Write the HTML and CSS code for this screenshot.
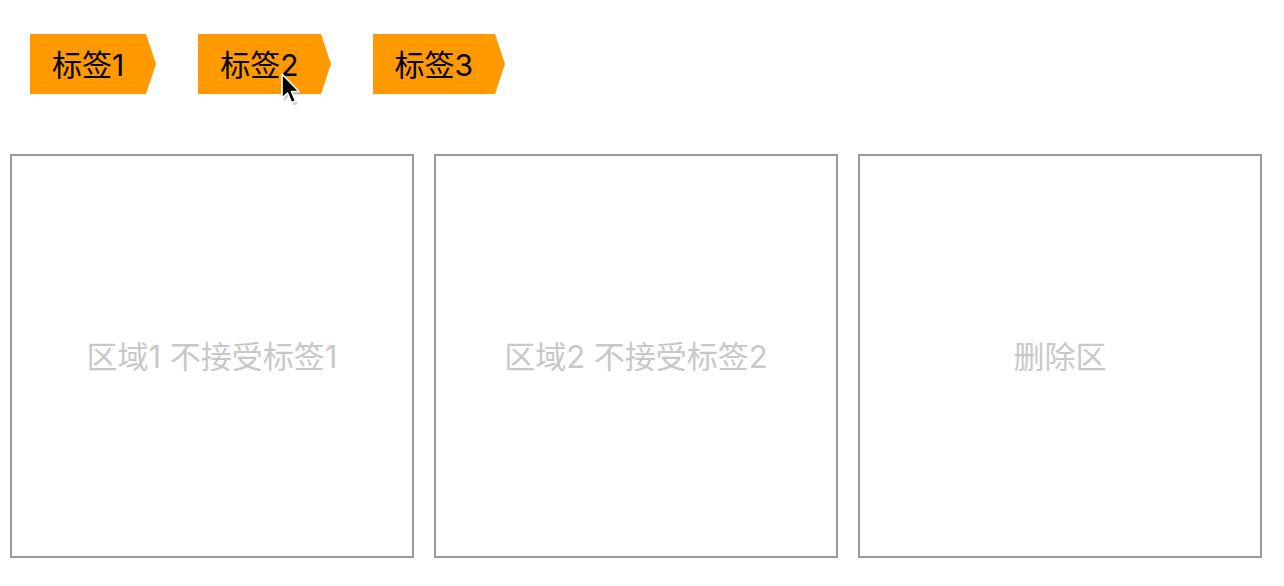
FILE: index.html
```html
<!DOCTYPE html>
<html lang="zh-CN">
<head>
<meta charset="utf-8">
<title>拖放</title>
<link rel="stylesheet" href="styles.css">
</head>
<body>
<div class="page">
  <div class="tags">
    <div class="tag">标签1</div>
    <div class="tag tag-hover">标签2
      <svg class="cursor" width="26" height="38" viewBox="0 0 26 38">
        <path d="M4 5 L4 29 L9.5 24 L13.5 33.5 L17.5 32 L13.5 22.5 L21 22.5 Z" fill="#bbb" opacity="0.7"/>
        <path d="M2 2 L2 26 L7.5 21 L11.5 30.5 L15.5 29 L11.5 19.5 L19 19.5 Z" fill="#000" stroke="#fff" stroke-width="1.6" stroke-linejoin="round"/>
      </svg>
    </div>
    <div class="tag">标签3</div>
  </div>
  <div class="zones">
    <div class="zone">区域1 不接受标签1</div>
    <div class="zone">区域2 不接受标签2</div>
    <div class="zone">删除区</div>
  </div>
</div>
</body>
</html>
```
FILE: styles.css
```css
html, body {
  margin: 0;
  padding: 0;
  background: #fff;
}
.page {
  font-family: "Inter", "Noto Sans CJK SC", sans-serif;
  padding: 34px 0 0 10px;
}
.tags {
  display: flex;
  gap: 42px;
  padding-left: 20px;
  height: 60px;
}
.tag {
  position: relative;
  height: 60px;
  line-height: 62px;
  padding: 0 22px;
  background: #ff9900;
  color: #000;
  font-size: 30px;
  margin-right: 10px;
}
.tag::after {
  content: "";
  position: absolute;
  left: 100%;
  top: 0;
  border-left: 10px solid #ff9900;
  border-top: 30px solid transparent;
  border-bottom: 30px solid transparent;
}
.cursor {
  position: absolute;
  left: 82px;
  top: 38px;
}
.zones {
  display: flex;
  gap: 20px;
  margin-top: 60px;
}
.zone {
  width: 400px;
  height: 396px;
  padding-bottom: 4px;
  border: 2px solid #999;
  display: flex;
  align-items: center;
  justify-content: center;
  color: #c8c8c8;
  font-size: 31px;
}
```
